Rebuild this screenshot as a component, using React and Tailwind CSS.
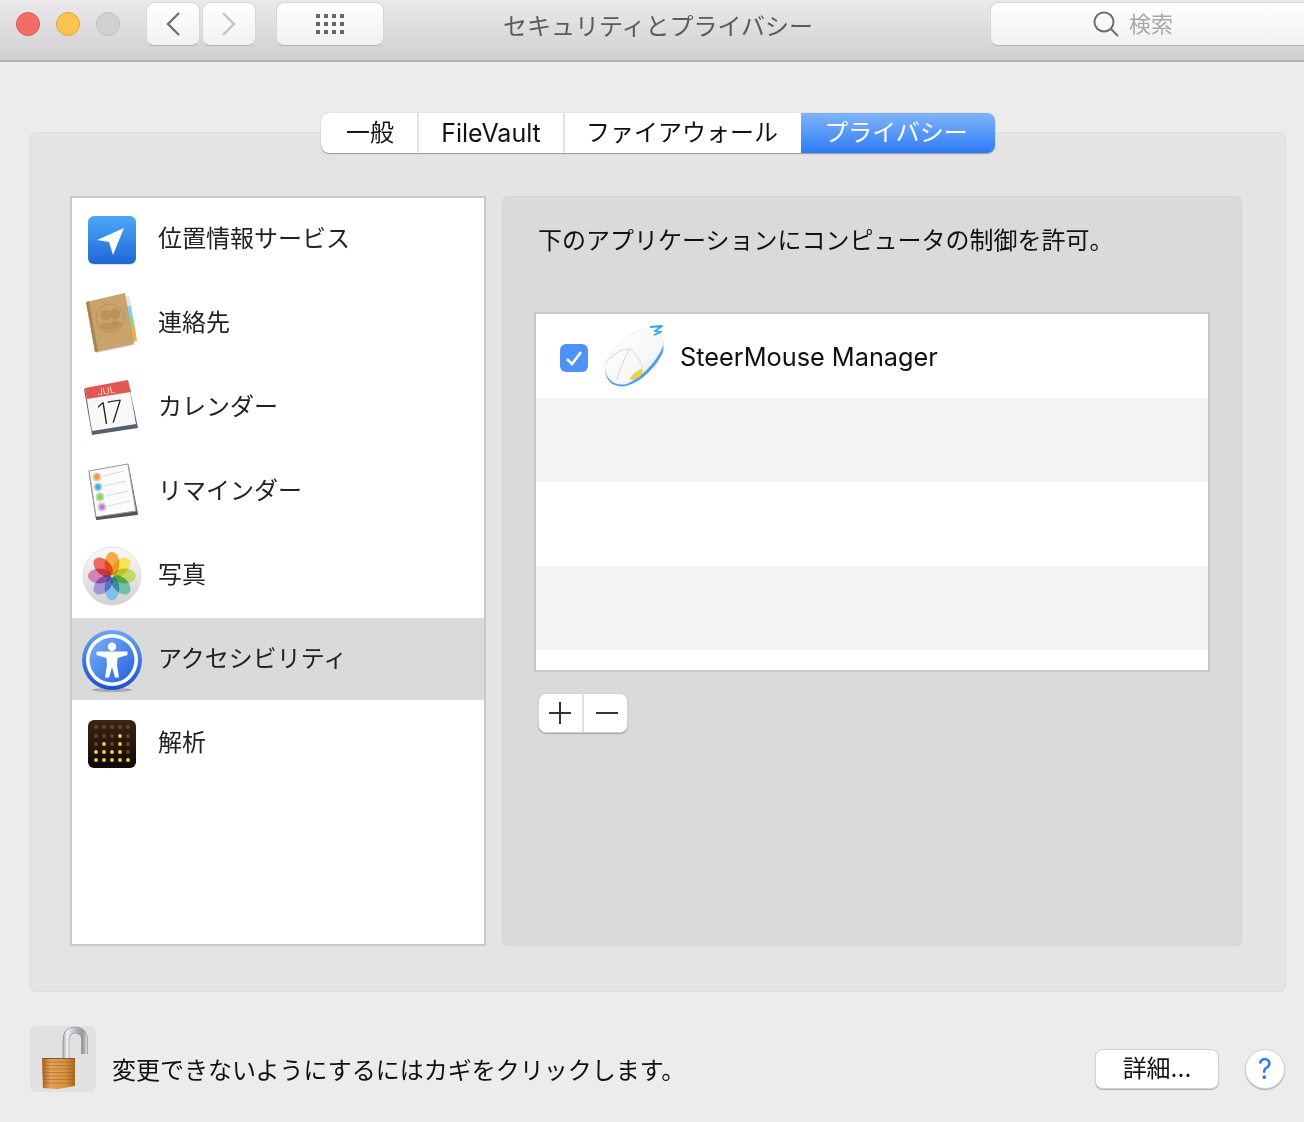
import React from "react";

const SVG = ({ children, w = 60, h = 64 }) => (
  <svg width={w} height={h} viewBox={`0 0 ${w} ${h}`} className="block shrink-0 overflow-visible">{children}</svg>
);

const LocationIcon = () => (
  <SVG>
    <defs>
      <linearGradient id="loc" x1="0" y1="0" x2="0" y2="1"><stop offset="0" stopColor="#4aaaf5" /><stop offset="1" stopColor="#1f66d8" /></linearGradient>
    </defs>
    <rect x="6" y="10" width="48" height="48" rx="6" fill="#000" opacity=".12" />
    <rect x="6" y="9" width="48" height="48" rx="6" fill="url(#loc)" />
    <polygon points="42,21 15,33 27,35 31,48" fill="#fff" />
  </SVG>
);

const ContactsIcon = () => (
  <SVG>
    <polygon points="42,6 47,5 50,17 45,18" fill="#e4e4e4" />
    <polygon points="44,16 49,15 51,27 46,28" fill="#8ccbee" />
    <polygon points="46,26 51,25 53,38 48,39" fill="#93cf98" />
    <polygon points="48,37 53,36 55,50 50,51" fill="#e4b34c" />
    <polygon points="5,12 43,3 52,54 14,62" fill="#000" opacity=".18" />
    <polygon points="4,11 43,2 52,53 13,61" fill="#c9a36b" />
    <polygon points="4,11 7,10.3 16,60.4 13,61" fill="#a9854f" />
    <circle cx="28" cy="27" r="14" fill="none" stroke="#b8925a" strokeWidth="1" />
    <circle cx="24" cy="24" r="5.2" fill="#bb955d" />
    <circle cx="33" cy="23" r="5.2" fill="#b8925a" />
    <path d="M17 37 C18 31 30 30 32 35 L33 38 L22 40 Z" fill="#bb955d" />
    <path d="M29 31 C33 29 39 30 40 34 L33 38 Z" fill="#b8925a" />
  </SVG>
);

const CalendarIcon = () => (
  <SVG>
    <polygon points="2,14 46,6 56,53 10,60" fill="#56616b" />
    <polygon points="3,13 46,5 54,49 10,56" fill="#f8f8f8" />
    <polygon points="3,13 46,5 49,17 5,24" fill="#e2574f" />
    <text x="0" y="0" transform="translate(16 20.5) rotate(-9)" fontSize="9.5" fill="#fff" fontFamily="Inter, sans-serif" fontWeight="300">JUL</text>
    <text x="0" y="0" transform="translate(17 50) rotate(-9)" fontSize="30" fill="#222" fontFamily="Inter, sans-serif" fontWeight="200" letterSpacing="-1">17</text>
  </SVG>
);

const RemindersIcon = () => (
  <SVG>
    <polygon points="8,15 46,8 55,55 15,60" fill="#555" stroke="#555" strokeWidth="2" strokeLinejoin="round" />
    <polygon points="7,12 46,5 54,52 14,58" fill="#fbfbfb" stroke="#999" strokeWidth="1.2" strokeLinejoin="round" />
    {[[15, 18, "#f59a2c", 42, 12], [16, 28, "#3db1ef", 44, 22], [18, 38, "#8ad54a", 46, 32], [20, 48, "#c47adf", 48, 42]].map(([x, y, c, ex, ey]) => (
      <g key={y}>
        <circle cx={x} cy={y} r="4" fill="#fff" stroke="#aaa" strokeWidth=".7" />
        <circle cx={x} cy={y} r="2.9" fill={c} />
        <line x1={x + 6} y1={y - 1} x2={ex} y2={ey} stroke="#d4d4d4" strokeWidth=".8" />
      </g>
    ))}
  </SVG>
);

const PhotosIcon = () => {
  const petals = ["#f4ab4a", "#f8e25e", "#c3da68", "#72c0a6", "#80c0ec", "#a198d6", "#d284ba", "#ec6a60"];
  return (
    <SVG>
      <defs>
        <linearGradient id="ph" x1="0" y1="0" x2="0" y2="1"><stop offset="0" stopColor="#fafafa" /><stop offset="1" stopColor="#d2d2d2" /></linearGradient>
      </defs>
      <circle cx="30" cy="33" r="29" fill="url(#ph)" stroke="#d4d4d4" strokeWidth=".6" />
      <g className="isolate">
        {petals.map((c, i) => (
          <ellipse key={c} className="mix-blend-multiply" cx="30" cy="20.5" rx="7.4" ry="11.5" fill={c} transform={`rotate(${i * 45} 30 33)`} />
        ))}
      </g>
    </SVG>
  );
};

const AccessIcon = () => (
  <SVG>
    <defs>
      <linearGradient id="acO" x1="0" y1="0" x2="0" y2="1"><stop offset="0" stopColor="#6aa5ee" /><stop offset="1" stopColor="#1c4fd0" /></linearGradient>
      <linearGradient id="acI" x1="0" y1="0" x2="1" y2="1"><stop offset="0" stopColor="#7ab2f4" /><stop offset="1" stopColor="#2460e0" /></linearGradient>
    </defs>
    <ellipse cx="30" cy="63" rx="20" ry="2" fill="#000" opacity=".22" />
    <circle cx="30" cy="33" r="30" fill="url(#acO)" />
    <circle cx="30" cy="33" r="26" fill="#fff" />
    <circle cx="30" cy="33" r="22.5" fill="url(#acI)" />
    <circle cx="30" cy="19.7" r="4.2" fill="#fff" />
    <path d="M14.5 24.5 L45.5 24.5 L45.5 28 L35.5 31 L35 38 L37 50.5 L33 50.5 L30 40 L27 50.5 L23 50.5 L25 38 L24.5 31 L14.5 28 Z" fill="#fff" />
  </SVG>
);

const AnalyticsIcon = () => {
  const xs = [14, 22, 30, 38, 46];
  const ys = [16, 25, 33, 41, 49];
  const lit = new Set(["1-3", "2-1", "2-3", "3-0", "3-1", "3-2", "3-3", "4-0", "4-1", "4-2", "4-3", "4-4"]);
  return (
    <SVG>
      <defs>
        <linearGradient id="an" x1="0" y1="0" x2="0" y2="1"><stop offset="0" stopColor="#3a2412" /><stop offset=".6" stopColor="#22150b" /><stop offset="1" stopColor="#0c0a08" /></linearGradient>
      </defs>
      <rect x="6" y="9" width="48" height="48" rx="6" fill="url(#an)" />
      {ys.map((y, r) => xs.map((x, c) => (
        <circle key={`${r}-${c}`} cx={x} cy={y} r="1.9" fill={lit.has(`${r}-${c}`) ? "#f6cf4e" : "#6a4420"} />
      )))}
    </SVG>
  );
};

const MouseIcon = () => (
  <SVG>
    <defs>
      <linearGradient id="ms" x1="0" y1="0" x2="1" y2="1"><stop offset="0" stopColor="#ffffff" /><stop offset=".6" stopColor="#f8f8f8" /><stop offset="1" stopColor="#dcdcdc" /></linearGradient>
    </defs>
    <path d="M1 46 C0 36 10 26 24 14 C36 4 50 4 56 12 C60 18 60 24 59 28 C53 42 38 58 22 62 C10 64 2 58 1 46 Z" fill="#4f9fe6" />
    <path d="M1 44 C0 35 10 25 24 13 C36 3 50 3 56 11 C60 17 60 21 58 24 C52 38 36 55 22 60 C10 62 2 55 1 44 Z" fill="url(#ms)" stroke="#e6e6e6" strokeWidth=".6" />
    <path d="M2 38 C10 30 18 24 25 25 C31 27 37 38 39 44" fill="none" stroke="#cfcfcf" strokeWidth=".8" />
    <path d="M25 25 C21 34 16 44 13 56" fill="none" stroke="#cfcfcf" strokeWidth=".8" />
    <path d="M26 55 C29 50 33 47 38 45 C39 49 37 52 34 54 C31 55 28 56 26 55 Z" fill="#e8d050" stroke="#cbb53c" strokeWidth=".4" />
    <path d="M46 3 L58 2 L51 7 L57 8 L50 11" fill="none" stroke="#37a4e8" strokeWidth="1.8" strokeLinejoin="round" />
  </SVG>
);

const LockIcon = () => (
  <svg width="66" height="66" viewBox="0 0 66 66" className="block">
    <defs>
      <linearGradient id="sh" gradientUnits="userSpaceOnUse" x1="32" y1="0" x2="58" y2="0">
        <stop offset="0" stopColor="#8f979e" /><stop offset=".2" stopColor="#f4f5f6" /><stop offset=".5" stopColor="#b8bdc2" /><stop offset=".8" stopColor="#8f979e" /><stop offset="1" stopColor="#eceeef" />
      </linearGradient>
      <linearGradient id="lb" x1="0" y1="0" x2="1" y2="0"><stop offset="0" stopColor="#a85f1a" /><stop offset=".25" stopColor="#e3a258" /><stop offset=".7" stopColor="#d8933f" /><stop offset="1" stopColor="#ad6820" /></linearGradient>
    </defs>
    <rect width="66" height="66" rx="6" fill="#e1e1e1" />
    <path d="M36 32 V14 C36 7 40 4 45 4 C50 4 54.5 7 54.5 14 V28" fill="none" stroke="#858c93" strokeWidth="6.6" strokeLinecap="butt" />
    <path d="M36 32 V14 C36 7 40 4 45 4 C50 4 54.5 7 54.5 14 V28" fill="none" stroke="url(#sh)" strokeWidth="5.4" />
    <path d="M12 32 L45 32 L45 60 L28 63 L13 62 Z" fill="url(#lb)" />
    <line x1="12" y1="32.5" x2="45" y2="32.5" stroke="#7d5a32" strokeWidth="1" />
    {[36, 39.5, 43, 46.5, 50, 53.5, 57].map((y) => (
      <line key={y} x1="12.5" y1={y} x2="45" y2={y} stroke="#8a4f14" strokeWidth="1" opacity=".4" />
    ))}
  </svg>
);

const items = [
  ["位置情報サービス", LocationIcon],
  ["連絡先", ContactsIcon],
  ["カレンダー", CalendarIcon],
  ["リマインダー", RemindersIcon],
  ["写真", PhotosIcon],
  ["アクセシビリティ", AccessIcon],
  ["解析", AnalyticsIcon],
];

const tbBtn = "flex shrink-0 items-center justify-center h-[44px] rounded-[8px] border border-[#d6d6d6] border-b-[#b4b4b4] bg-gradient-to-b from-white to-[#f1f1f1]";
const raised = "bg-white border border-[#d2d2d2] shadow-[0_1px_1px_rgba(0,0,0,0.25)]";

export default function App() {
  return (
    <div className="w-[1304px] h-[1122px] overflow-hidden bg-[#ececec] text-[#222] text-[24px] font-['Inter','Noto_Sans_CJK_JP',sans-serif]">
      {/* title bar */}
      <div className="relative flex items-start h-[62px] border-b-2 border-[#b2b0b2] bg-gradient-to-b from-[#ebe9eb] to-[#d1cfd1]">
        <div className="flex shrink-0 gap-[16px] pl-[16px] pt-[12px]">
          <div className="w-[24px] h-[24px] rounded-full bg-[#f26d63] border border-[#dc5a50]" />
          <div className="w-[24px] h-[24px] rounded-full bg-[#fac44f] border border-[#e0a63a]" />
          <div className="w-[24px] h-[24px] rounded-full bg-[#d2d0d2] border border-[#bebcbe]" />
        </div>
        <div className="flex shrink-0 gap-[2px] ml-[26px] mt-[2px]">
          <button className={`${tbBtn} w-[54px]`}>
            <svg width="16" height="26" viewBox="0 0 16 26"><path d="M14 2 L3 13 L14 24" fill="none" stroke="#707070" strokeWidth="2.4" /></svg>
          </button>
          <button className={`${tbBtn} w-[54px]`}>
            <svg width="16" height="26" viewBox="0 0 16 26"><path d="M2 2 L13 13 L2 24" fill="none" stroke="#c4c4c4" strokeWidth="2.4" /></svg>
          </button>
        </div>
        <button className={`${tbBtn} w-[108px] ml-[20px] mt-[2px]`}>
          <svg width="28" height="20" viewBox="0 0 28 20">
            {[0, 8, 16].map((y) => [0, 8, 16, 24].map((x) => (
              <rect key={`${x}-${y}`} x={x} y={y} width="4" height="4" fill="#666" />
            )))}
          </svg>
        </button>
        <div className="ml-[119px] w-[310px] shrink-0 text-center leading-[54px] text-[#5c5a5c] whitespace-nowrap">セキュリティとプライバシー</div>
        <div className={`${tbBtn} ml-[177px] mt-[2px] w-[316px] gap-[10px] pr-[30px] rounded-r-none`}>
          <svg width="26" height="26" viewBox="0 0 26 26"><circle cx="11" cy="11" r="9.5" fill="none" stroke="#6e6e6e" strokeWidth="2" /><path d="M18 18 L25 25" stroke="#6e6e6e" strokeWidth="2" /></svg>
          <span className="text-[#a8a8a8] text-[22px]">検索</span>
        </div>
      </div>

      {/* group box */}
      <div className="ml-[30px] mt-[70px] w-[1256px] h-[860px] box-border border border-[#dcdcdc] rounded-[6px] bg-[#e4e4e4] flex flex-col">
        <div className="-mt-[20px] self-center flex w-[674px] h-[40px] rounded-[8px] bg-white shadow-[0_1px_1px_rgba(0,0,0,0.3),0_0_1px_rgba(0,0,0,0.3)] overflow-hidden shrink-0 leading-[40px] text-center text-[#111]">
          <div className="w-[98px] pl-[2px] border-r-2 border-[#e2e2e2]">一般</div>
          <div className="w-[146px] border-r-2 border-[#e2e2e2] text-[25px]">FileVault</div>
          <div className="w-[236px] pr-[2px]">ファイアウォール</div>
          <div className="w-[194px] pr-[4px] text-white bg-gradient-to-b from-[#7fb3f8] to-[#2a7bf6]">プライバシー</div>
        </div>

        <div className="flex ml-[39px] mt-[43px]">
          {/* sidebar */}
          <div className="w-[416px] h-[750px] box-border border-2 border-[#c8c8c8] bg-white flex flex-col gap-[2px]">
            {items.map(([label, Icon], i) => (
              <div key={label} className={`flex items-center h-[82px] pl-[10px] ${i === 5 ? "bg-[#dadada]" : ""}`}>
                <Icon />
                <span className="ml-[16px]">{label}</span>
              </div>
            ))}
          </div>

          {/* right pane */}
          <div className="ml-[16px] w-[740px] h-[750px] rounded-[6px] border border-[#d4d4d4] box-border bg-[#dadada] pt-[28px]">
            <div className="ml-[35px] leading-[32px] text-[#111]">下のアプリケーションにコンピュータの制御を許可。</div>
            <div className="mt-[55px] ml-[31px] w-[676px] h-[360px] box-border border-2 border-[#c8c8c8] bg-white">
              <div className="flex items-center h-[84px] pl-[24px]">
                <div className="w-[28px] h-[28px] mt-[4px] rounded-[6px] bg-[#4f92f7] flex items-center justify-center">
                  <svg width="18" height="16" viewBox="0 0 18 16"><path d="M2 9 L7 14 L16 2" fill="none" stroke="#fff" strokeWidth="2.6" /></svg>
                </div>
                <div className="ml-[16px]"><MouseIcon /></div>
                <span className="ml-[16px] mt-[2px] text-[25.3px] text-[#111]">SteerMouse Manager</span>
              </div>
              <div className="h-[84px] bg-[#f4f4f4]" />
              <div className="h-[84px]" />
              <div className="h-[84px] bg-[#f4f4f4]" />
            </div>
            <div className={`mt-[21px] ml-[35px] flex w-[90px] h-[40px] rounded-[8px] overflow-hidden box-border ${raised}`}>
              <div className="w-[45px] h-full border-r-2 border-[#e0e0e0] flex items-center justify-center pr-[2px]">
                <svg width="22" height="22" viewBox="0 0 22 22"><path d="M0 11 H22 M11 0 V22" stroke="#333" strokeWidth="2" /></svg>
              </div>
              <div className="flex-1 flex items-center justify-center pl-[2px]">
                <svg width="22" height="4" viewBox="0 0 22 4"><path d="M0 2 H22" stroke="#333" strokeWidth="2" /></svg>
              </div>
            </div>
          </div>
        </div>
      </div>

      {/* footer */}
      <div className="flex items-start pl-[30px] mt-[34px]">
        <LockIcon />
        <div className="ml-[16px] mt-[29px] leading-[32px] text-[#111]">変更できないようにするにはカギをクリックします。</div>
        <button className={`ml-auto mt-[23px] w-[124px] h-[40px] rounded-[8px] box-border text-center leading-[36px] text-[#111] ${raised}`}>詳細...</button>
        <div className={`ml-[26px] mr-[19px] mt-[23px] w-[40px] h-[40px] rounded-full box-border flex items-center justify-center text-[#2d7cf6] text-[28px] leading-none ${raised}`}>?</div>
      </div>
    </div>
  );
}
